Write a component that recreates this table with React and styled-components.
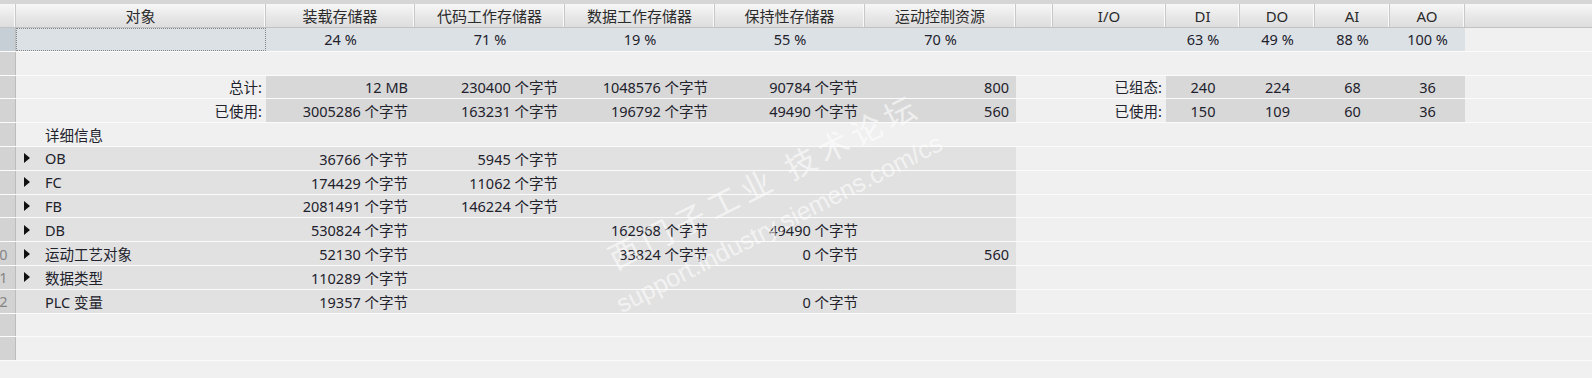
import React from "react";
import styled, { createGlobalStyle } from "styled-components";

const GlobalStyle = createGlobalStyle`
  html, body {
    margin: 0;
    padding: 0;
    background: #f0f0f0;
  }
  body {
    font-family: "Noto Sans", "Noto Sans CJK SC", sans-serif;
    font-size: 14.5px;
    color: #22222c;
  }
`;

const GRID = "16px 250px 149px 150px 150px 150px 151px 37px 113px 74px 75px 75px 75px 1fr";

const FILLS = {
  sel: "#dce1e6",
  total: "#d8d8d8",
  detail: "#e1e1e1",
};

const Page = styled.div`
  position: relative;
  width: 1592px;
  height: 378px;
  overflow: hidden;
  background: #f0f0f0;
  border-top: 4px solid #d6d6d6;
  box-sizing: border-box;
`;

const HeaderRow = styled.div`
  display: grid;
  grid-template-columns: ${GRID};
  height: 24px;
  box-sizing: border-box;
  border-bottom: 1px solid #c2c2c2;
  background: linear-gradient(#f7f7f7, #e6e6e6 60%, #dedede);
`;

const HeaderCell = styled.div`
  display: flex;
  align-items: center;
  justify-content: center;
  border-right: ${(p) => (p.$last ? "none" : "1px solid #c8c8c8")};
  box-shadow: ${(p) => (p.$last ? "none" : "inset -1px 0 0 #fafafa")};
  color: #2b2b2b;
  font-size: 15px;
  white-space: nowrap;
  overflow: hidden;
`;

const Row = styled.div`
  display: grid;
  grid-template-columns: ${GRID};
  height: 23.8px;
  box-sizing: border-box;
  border-bottom: 1px solid #fbfbfb;
`;

// row numbers are scrolled partly out of view, only the last digit of 10+ shows
const RowHead = styled.div`
  background: ${(p) => (p.$selected ? "#c6ced6" : "#d3d3d3")};
  border-right: 1px solid #bcbcbc;
  overflow: hidden;
  white-space: nowrap;
  color: #858585;
  font-size: 14.5px;
  display: flex;
  align-items: center;

  span {
    margin-left: -9px;
  }
`;

const Cell = styled.div`
  display: flex;
  align-items: center;
  justify-content: ${(p) =>
    p.$align === "right" ? "flex-end" : p.$align === "center" ? "center" : "flex-start"};
  padding: ${(p) => (p.$align === "center" ? "0" : "0 7px 0 0")};
  padding-left: ${(p) => (p.$indent ? `${p.$indent}px` : undefined)};
  background: ${(p) => (p.$fill ? FILLS[p.$fill] : "transparent")};
  outline: ${(p) => (p.$focus ? "1px dotted #858585" : "none")};
  outline-offset: -1px;
  white-space: nowrap;
  overflow: hidden;
`;

const Label = styled.span`
  margin-right: -3px;
`;

const Expander = styled.span`
  width: 0;
  height: 0;
  border-top: 5px solid transparent;
  border-bottom: 5px solid transparent;
  border-left: 6px solid #111;
  margin-left: 8px;
  margin-right: 15px;
  visibility: ${(p) => (p.$hidden ? "hidden" : "visible")};
`;

const Watermark = styled.div`
  position: absolute;
  left: 590px;
  top: 247px;
  transform: rotate(-27deg);
  transform-origin: left top;
  pointer-events: none;
  color: rgba(255, 255, 255, 0.6);
  font-family: "Liberation Sans", "Noto Sans CJK SC", sans-serif;
  white-space: nowrap;
  line-height: 1;
`;

const MarkTitle = styled.div`
  font-family: "Noto Sans CJK SC", sans-serif;
  font-size: 31px;
  letter-spacing: 6px;
  margin-left: 14px;
`;

const MarkUrl = styled.div`
  font-size: 25px;
  margin-top: 18px;
`;

const HEADERS = [
  "",
  "对象",
  "装载存储器",
  "代码工作存储器",
  "数据工作存储器",
  "保持性存储器",
  "运动控制资源",
  "",
  "I/O",
  "DI",
  "DO",
  "AI",
  "AO",
  "",
];

const MEM = ["load", "code", "data", "retain", "motion"];
const IO = ["di", "do", "ai", "ao"];

const rows = [
  {
    kind: "sel",
    values: {
      load: "24 %",
      code: "71 %",
      data: "19 %",
      retain: "55 %",
      motion: "70 %",
      di: "63 %",
      do: "49 %",
      ai: "88 %",
      ao: "100 %",
    },
  },
  { kind: "spacer" },
  {
    kind: "sum",
    label: "总计:",
    ioLabel: "已组态:",
    values: {
      load: "12 MB",
      code: "230400 个字节",
      data: "1048576 个字节",
      retain: "90784 个字节",
      motion: "800",
      di: "240",
      do: "224",
      ai: "68",
      ao: "36",
    },
  },
  {
    kind: "sum",
    label: "已使用:",
    ioLabel: "已使用:",
    values: {
      load: "3005286 个字节",
      code: "163231 个字节",
      data: "196792 个字节",
      retain: "49490 个字节",
      motion: "560",
      di: "150",
      do: "109",
      ai: "60",
      ao: "36",
    },
  },
  { kind: "section", label: "详细信息" },
  { kind: "detail", label: "OB", values: { load: "36766 个字节", code: "5945 个字节" } },
  { kind: "detail", label: "FC", values: { load: "174429 个字节", code: "11062 个字节" } },
  { kind: "detail", label: "FB", values: { load: "2081491 个字节", code: "146224 个字节" } },
  {
    kind: "detail",
    label: "DB",
    values: { load: "530824 个字节", data: "162968 个字节", retain: "49490 个字节" },
  },
  {
    kind: "detail",
    label: "运动工艺对象",
    values: { load: "52130 个字节", data: "33824 个字节", retain: "0 个字节", motion: "560" },
  },
  { kind: "detail", label: "数据类型", values: { load: "110289 个字节" } },
  { kind: "detail", label: "PLC 变量", leaf: true, values: { load: "19357 个字节", retain: "0 个字节" } },
  { kind: "empty" },
  { kind: "empty" },
];

function renderCells(row) {
  const v = row.values || {};
  switch (row.kind) {
    case "sel":
      return [
        <Cell key="obj" $fill="sel" $focus />,
        ...MEM.map((k) => (
          <Cell key={k} $fill="sel" $align="center">
            {v[k]}
          </Cell>
        )),
        <Cell key="gap" $fill="sel" />,
        <Cell key="io" $fill="sel" />,
        ...IO.map((k) => (
          <Cell key={k} $fill="sel" $align="center">
            {v[k]}
          </Cell>
        )),
        <Cell key="rest" />,
      ];
    case "sum":
      return [
        <Cell key="obj" $align="right">
          <Label>{row.label}</Label>
        </Cell>,
        ...MEM.map((k) => (
          <Cell key={k} $fill="total" $align="right">
            {v[k]}
          </Cell>
        )),
        <Cell key="gap" />,
        <Cell key="io" $align="right">
          <Label>{row.ioLabel}</Label>
        </Cell>,
        ...IO.map((k) => (
          <Cell key={k} $fill="total" $align="center">
            {v[k]}
          </Cell>
        )),
        <Cell key="rest" />,
      ];
    case "section":
      return [
        <Cell key="obj" $indent={29}>
          {row.label}
        </Cell>,
      ];
    case "detail":
      return [
        <Cell key="obj" $fill="detail">
          <Expander $hidden={row.leaf} />
          {row.label}
        </Cell>,
        ...MEM.map((k) => (
          <Cell key={k} $fill="detail" $align="right">
            {v[k]}
          </Cell>
        )),
      ];
    default:
      return [];
  }
}

export default function App() {
  return (
    <>
      <GlobalStyle />
      <Page>
        <HeaderRow>
          {HEADERS.map((h, i) => (
            <HeaderCell key={i} $last={i === HEADERS.length - 1}>
              {h}
            </HeaderCell>
          ))}
        </HeaderRow>
        {rows.map((row, i) => (
          <Row key={i}>
            <RowHead $selected={row.kind === "sel"}>
              {row.kind !== "empty" && <span>{i + 1}</span>}
            </RowHead>
            {renderCells(row)}
          </Row>
        ))}
        <Watermark>
          <MarkTitle>西门子工业 技术论坛</MarkTitle>
          <MarkUrl>support.industry.siemens.com/cs</MarkUrl>
        </Watermark>
      </Page>
    </>
  );
}
